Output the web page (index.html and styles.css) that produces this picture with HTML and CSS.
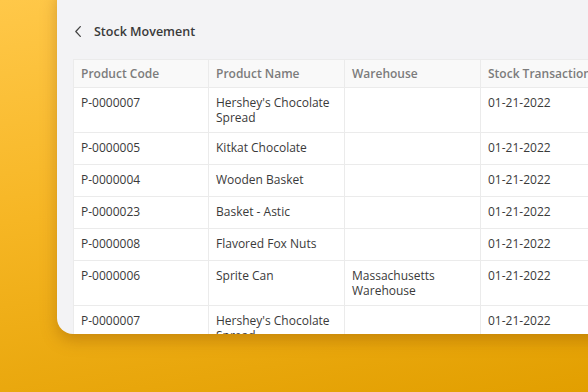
FILE: index.html
```html
<!DOCTYPE html>
<html lang="en">
<head>
    <meta charset="UTF-8">
    <meta name="viewport" content="width=device-width, initial-scale=1.0">
    <title>Stock Movement</title>
    <link rel="stylesheet" href="styles.css">
</head>
<body>
    <main class="panel">
        <div class="panel-header">
            <button class="back-button" title="Back">
                <svg viewBox="0 0 10 14" fill="none" xmlns="http://www.w3.org/2000/svg">
                    <path d="M7 1.5L2 7L7 12.5" stroke="currentColor" stroke-width="1.4" stroke-linecap="round" stroke-linejoin="round"/>
                </svg>
            </button>
            <h1 class="panel-title">Stock Movement</h1>
        </div>

        <table class="data-table">
            <colgroup>
                <col class="col-code">
                <col class="col-name">
                <col class="col-warehouse">
                <col class="col-date">
            </colgroup>
            <thead>
                <tr>
                    <th>Product Code</th>
                    <th>Product Name</th>
                    <th>Warehouse</th>
                    <th>Stock Transaction Date</th>
                </tr>
            </thead>
            <tbody>
                <tr>
                    <td>P-0000007</td>
                    <td>Hershey's Chocolate Spread</td>
                    <td></td>
                    <td>01-21-2022</td>
                </tr>
                <tr>
                    <td>P-0000005</td>
                    <td>Kitkat Chocolate</td>
                    <td></td>
                    <td>01-21-2022</td>
                </tr>
                <tr>
                    <td>P-0000004</td>
                    <td>Wooden Basket</td>
                    <td></td>
                    <td>01-21-2022</td>
                </tr>
                <tr>
                    <td>P-0000023</td>
                    <td>Basket - Astic</td>
                    <td></td>
                    <td>01-21-2022</td>
                </tr>
                <tr>
                    <td>P-0000008</td>
                    <td>Flavored Fox Nuts</td>
                    <td></td>
                    <td>01-21-2022</td>
                </tr>
                <tr>
                    <td>P-0000006</td>
                    <td>Sprite Can</td>
                    <td>Massachusetts Warehouse</td>
                    <td>01-21-2022</td>
                </tr>
                <tr>
                    <td>P-0000007</td>
                    <td>Hershey's Chocolate Spread</td>
                    <td></td>
                    <td>01-21-2022</td>
                </tr>
            </tbody>
        </table>
    </main>
</body>
</html>
```

FILE: styles.css
```css
:root {
    --text-color: #3a3a3a;
    --muted-color: #7c7c7c;
    --panel-bg: #f3f3f5;
    --border-color: #ebebeb;
    --header-bg: #f9f9f9;
}

* {
    margin: 0;
    padding: 0;
    box-sizing: border-box;
}

html, body {
    height: 100%;
    overflow: hidden;
}

body {
    font-family: "Open Sans", "Noto Sans", Arial, sans-serif;
    color: var(--text-color);
    background: linear-gradient(170deg, #ffc849 0%, #f6b624 45%, #e29f00 100%);
    padding-left: 57px;
}

.panel {
    width: 640px;
    height: 350px;
    margin-top: -16px;
    padding: 34px 0 0 16px;
    background-color: var(--panel-bg);
    border-radius: 16px;
    overflow: hidden;
    box-shadow: 0 6px 16px rgba(130, 70, 0, 0.35);
}

.panel-header {
    display: flex;
    align-items: center;
    gap: 11px;
    height: 26px;
    margin-bottom: 15px;
}

.back-button {
    display: inline-flex;
    align-items: center;
    background: none;
    border: none;
    color: #444;
    padding: 0 0 0 1px;
}

.back-button svg {
    width: 9px;
    height: 13px;
}

.panel-title {
    font-size: 12.5px;
    font-weight: 600;
    color: var(--text-color);
}

.data-table {
    table-layout: fixed;
    width: 620px;
    border-collapse: collapse;
    background-color: #fff;
    font-size: 12px;
    line-height: 15px;
}

.col-code { width: 135px; }
.col-name { width: 136px; }
.col-warehouse { width: 136px; }

.data-table th,
.data-table td {
    border: 1px solid var(--border-color);
    text-align: left;
    vertical-align: top;
    padding: 7px 7px;
}

.data-table th {
    background-color: var(--header-bg);
    color: var(--muted-color);
    font-weight: 600;
    padding: 6px 7px;
    height: 28px;
    vertical-align: middle;
    white-space: nowrap;
    overflow: hidden;
}

.data-table td {
    height: 32px;
}
```
